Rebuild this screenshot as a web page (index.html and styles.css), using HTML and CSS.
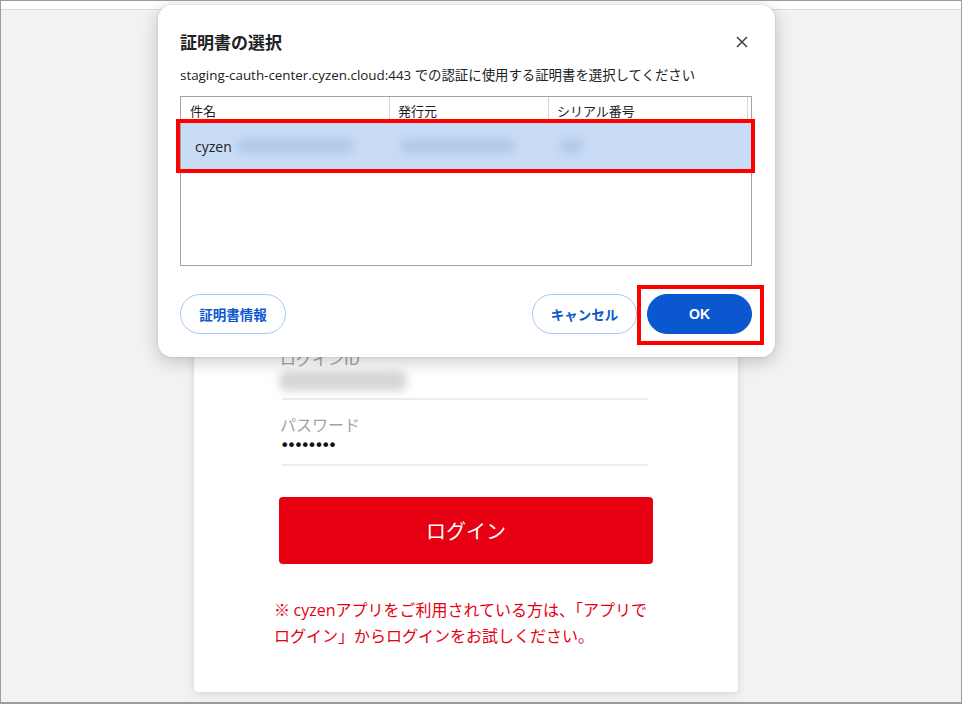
FILE: index.html
```html
<!DOCTYPE html>
<html lang="ja">
<head>
    <meta charset="UTF-8">
    <meta name="viewport" content="width=device-width, initial-scale=1.0">
    <title>ログイン</title>
    <link rel="stylesheet" href="styles.css">
</head>
<body>
    <div class="window">
        <div class="topbar"></div>

        <main class="page">
            <div class="login-card">
                <div class="field">
                    <div class="field-label">ログインID</div>
                    <div class="field-value"><span class="masked-id"></span></div>
                </div>
                <div class="field">
                    <div class="field-label">パスワード</div>
                    <div class="field-value dots">••••••••</div>
                </div>
                <button type="button" class="login-btn">ログイン</button>
                <p class="note">※ <span class="latin">cyzen</span>アプリをご利用されている方は、「アプリで<br>ログイン」からログインをお試しください。</p>
            </div>
        </main>

        <!-- client certificate picker -->
        <div class="cert-dialog">
            <div class="dialog-head">
                <h2 class="dialog-title">証明書の選択</h2>
                <button type="button" class="close-btn" aria-label="閉じる">
                    <svg width="12" height="12" viewBox="0 0 12 12">
                        <path d="M1 1 L11 11 M11 1 L1 11" stroke="#3c4043" stroke-width="1.5" fill="none"/>
                    </svg>
                </button>
            </div>
            <p class="dialog-sub">staging-cauth-center.cyzen.cloud:443 での認証に使用する証明書を選択してください</p>

            <div class="cert-table">
                <div class="cert-row cert-head">
                    <div class="cell">件名</div>
                    <div class="cell">発行元</div>
                    <div class="cell">シリアル番号</div>
                    <div class="cell"></div>
                </div>
                <div class="cert-row cert-item selected">
                    <div class="cell first">cyzen<span class="masked w1"></span></div>
                    <div class="cell"><span class="masked w2"></span></div>
                    <div class="cell"><span class="masked w3"></span></div>
                    <div class="cell"></div>
                </div>
            </div>

            <div class="dialog-actions">
                <button type="button" class="pill">証明書情報</button>
                <div class="action-group">
                    <button type="button" class="pill">キャンセル</button>
                    <button type="button" class="pill primary">OK</button>
                </div>
            </div>

            <!-- red marks -->
            <div class="mark mark-row"></div>
            <div class="mark mark-ok"></div>
        </div>
    </div>
</body>
</html>
```

FILE: styles.css
```css
* {
    box-sizing: border-box;
}
body {
    margin: 0;
    font-family: "Open Sans", "Noto Sans CJK JP", sans-serif;
    color: #202124;
}
.window {
    position: relative;
    width: 962px;
    height: 704px;
    border: 1px solid #9c9c9c;
    border-bottom-width: 2px;
    background-color: #f2f2f2;
    overflow: hidden;
}
.topbar {
    height: 9px;
    background: #fff;
    border-bottom: 1px solid #dcdcdc;
}

/* login page behind the dialog */
.page {
    padding-left: 193px;
}
.login-card {
    width: 544px;
    margin-top: 290px;
    padding: 48px 85px 44px;
    background: #fff;
    border-radius: 4px;
    box-shadow: 0 2px 8px rgba(0,0,0,0.12);
    font-family: "Noto Sans CJK JP", sans-serif;
}
.field {
    margin: 0 5px 14px 3px;
    padding-bottom: 8px;
    border-bottom: 2px solid #ebebf0;
}
.field-label {
    margin-left: -2px;
    font-size: 16px;
    line-height: 20px;
    color: #a3a3a3;
}
.field-value {
    margin-top: 2px;
    height: 20px;
    line-height: 20px;
    font-size: 16px;
}
.masked-id {
    display: inline-block;
    width: 128px;
    height: 20px;
    margin: 1px 0 0 -3px;
    background: #d6d6d6;
    border-radius: 8px;
    filter: blur(4px);
}
.dots {
    margin-left: -2px;
    font-family: "DejaVu Sans", sans-serif;
    font-size: 16px;
    letter-spacing: -2.6px;
    color: #111;
}
.login-btn {
    display: block;
    width: 100%;
    height: 67px;
    margin-top: 31px;
    border: none;
    border-radius: 4px;
    background-color: #e60012;
    color: #fff;
    font-family: "Noto Sans CJK JP", sans-serif;
    font-size: 20px;
}
.note {
    margin: 33px 0 0 -5px;
    width: 400px;
    font-size: 16px;
    line-height: 25px;
    color: #e60012;
    white-space: nowrap;
}
.note .latin {
    font-family: "Open Sans", sans-serif;
}

/* certificate dialog */
.cert-dialog {
    position: absolute;
    left: 157px;
    top: 4px;
    width: 617px;
    height: 352px;
    padding: 25px 23px 23px 22px;
    background: #fff;
    border-radius: 14px;
    box-shadow: 0 4px 18px rgba(0,0,0,0.22), 0 0 2px rgba(0,0,0,0.15);
    font-size: 13px;
}
.dialog-head {
    display: flex;
    justify-content: space-between;
    align-items: center;
    height: 24px;
}
.dialog-title {
    margin: 0;
    font-size: 17px;
    font-weight: 600;
    line-height: 24px;
    font-family: "Noto Sans CJK JP", sans-serif;
}
.close-btn {
    width: 20px;
    height: 20px;
    padding: 0;
    border: none;
    background: none;
    display: flex;
    align-items: center;
    justify-content: center;
}
.dialog-sub {
    margin: 11px 0 0;
    line-height: 20px;
    font-size: 13.4px;
}
.cert-table {
    height: 170px;
    margin-top: 11px;
    border: 1px solid #a4a4a4;
}
.cert-row {
    display: grid;
    grid-template-columns: 209px 159px 199px 1fr;
}
.cert-head .cell {
    height: 24px;
    padding: 4px 0 0 8px;
    line-height: 20px;
    border-right: 1px solid #d6d6d6;
}
.cert-head .cell:first-child {
    padding-left: 9px;
}
.cert-head .cell:last-child {
    border-right: none;
}
.cert-item {
    height: 48px;
    margin-top: 1px;
}
.cert-item .cell {
    display: flex;
    align-items: center;
}
.cert-item .first {
    padding-left: 14px;
    font-size: 14px;
}
.selected {
    background-color: #c8dcf6;
}
.masked {
    display: inline-block;
    height: 14px;
    background: #b2c8e6;
    border-radius: 7px;
    filter: blur(4px);
}
.masked.w1 {
    width: 118px;
    margin-left: 4px;
}
.masked.w2 {
    width: 116px;
    margin-left: 10px;
}
.masked.w3 {
    width: 24px;
    margin-left: 10px;
}
.dialog-actions {
    display: flex;
    justify-content: space-between;
    margin-top: 28px;
}
.action-group {
    display: flex;
    gap: 10px;
}
.pill {
    width: 105px;
    height: 40px;
    border: 1px solid #a8c7fa;
    border-radius: 20px;
    background: #fff;
    color: #0b57d0;
    font-family: "Liberation Sans", "Noto Sans CJK JP", sans-serif;
    font-size: 13.5px;
    font-weight: bold;
}
.dialog-actions > .pill {
    width: 106px;
}
.pill.primary {
    border-color: #0b57d0;
    background-color: #0b57d0;
    color: #fff;
    font-size: 14px;
}
.mark {
    position: absolute;
    border: 4px solid #ff0000;
}
.mark-row {
    left: 18px;
    top: 114px;
    width: 579px;
    height: 54px;
}
.mark-ok {
    left: 479px;
    top: 280px;
    width: 127px;
    height: 60px;
}
```
